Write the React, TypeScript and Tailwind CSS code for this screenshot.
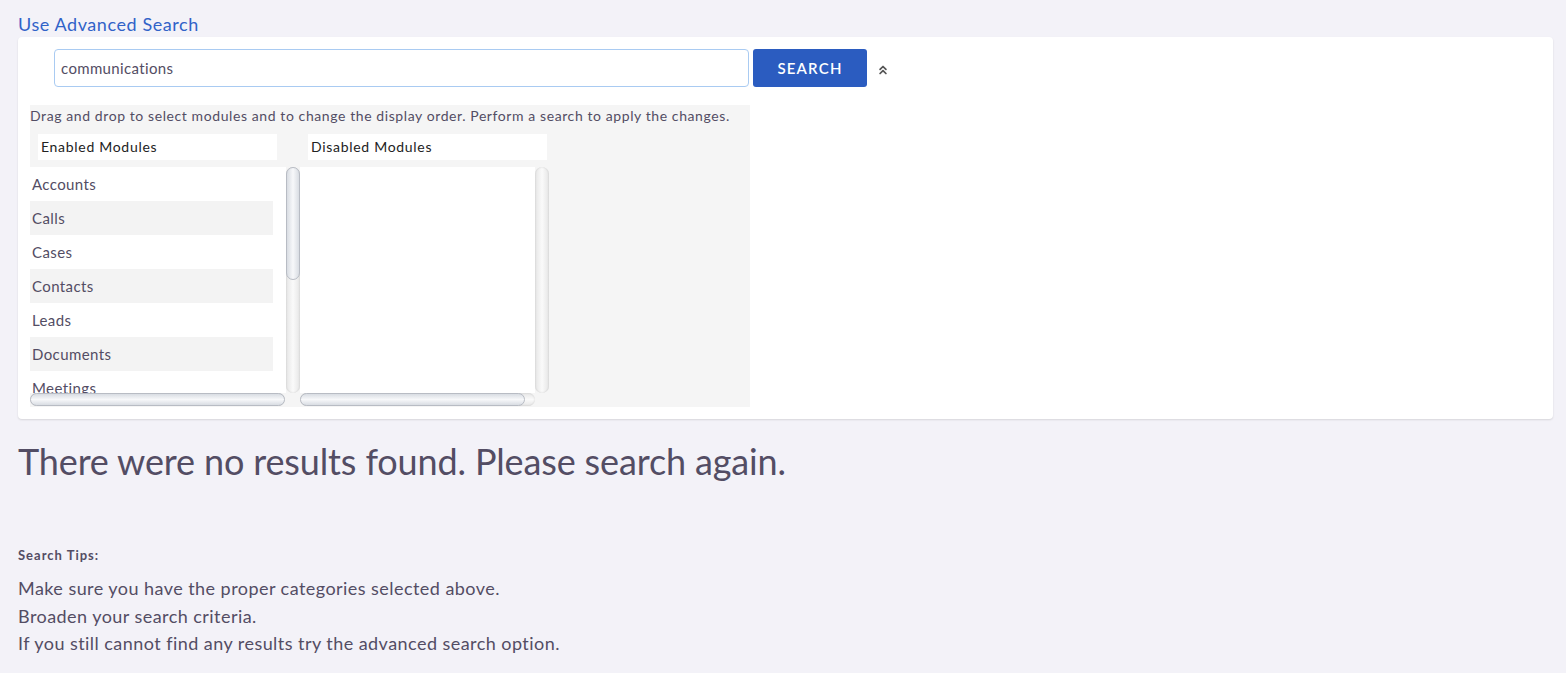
import { ChevronsUp } from 'lucide-react';

const enabledModules = ['Accounts', 'Calls', 'Cases', 'Contacts', 'Leads', 'Documents', 'Meetings', 'Notes'];

const VScroll = ({ thumb }: { thumb: string }) => (
    <div className="relative w-[14px] h-full rounded-full bg-gradient-to-r from-[#e6e6e6] via-[#fafafa] to-[#e6e6e6] shadow-[inset_0_0_2px_rgba(0,0,0,0.15)]">
        <div className={`absolute left-0 top-0 w-[14px] ${thumb} rounded-full border border-[#b8bcc4] bg-gradient-to-r from-[#d9dde3] via-[#f7f8fa] to-[#d9dde3]`} />
    </div>
);

const HScroll = ({ thumb }: { thumb: string }) => (
    <div className="relative h-[13px] w-full rounded-full bg-gradient-to-b from-[#e6e6e6] via-[#fafafa] to-[#e6e6e6] shadow-[inset_0_0_2px_rgba(0,0,0,0.15)]">
        <div className={`absolute left-0 top-0 h-[13px] ${thumb} rounded-full border border-[#b8bcc4] bg-gradient-to-b from-[#d9dde3] via-[#f7f8fa] to-[#d9dde3]`} />
    </div>
);

const App = () => {
    return (
        <div className="min-h-screen bg-[#f3f2f8] pl-[18px] pr-[13px] pt-[12px] font-['Lato','Noto_Sans',sans-serif] text-[#534d64]">
            <a href="#" className="block text-[18px] leading-[25px] tracking-[0.58px] text-[#3162c8]">Use Advanced Search</a>

            <div className="bg-white rounded-[4px] shadow-[0_1px_2px_rgba(0,0,0,0.12)] px-3 pt-3 pb-[12px]">
                {/* search row */}
                <div className="flex items-center ml-6">
                    <input
                        defaultValue="communications"
                        className="w-[695px] h-[38px] rounded-[4px] border border-[#a9cbf2] px-[6px] text-[15px] tracking-[0.35px] text-[#534d64] outline-none"
                    />
                    <button className="ml-[4px] w-[114px] h-[38px] rounded-[3px] bg-[#2b5cc0] text-white text-[15px] font-semibold tracking-[0.08em]">
                        SEARCH
                    </button>
                    <ChevronsUp className="ml-[9px] mt-[3px] text-[#555]" size={14} strokeWidth={3} />
                </div>

                {/* module selector */}
                <div className="mt-[18px] w-[720px] h-[302px] bg-[#f5f5f5]">
                    <p className="text-[14px] leading-[22px] tracking-[0.59px]">
                        Drag and drop to select modules and to change the display order. Perform a search to apply the changes.
                    </p>
                    <div className="flex mt-[7px]">
                        <div className="w-[270px]">
                            <div className="ml-2 w-[239px] h-[26px] bg-white px-[3px] text-[14px] leading-[26px] tracking-[0.7px] text-[#222]">Enabled Modules</div>
                            <div className="mt-[7px] grid grid-cols-[256px_14px] grid-rows-[226px_13px]">
                                <div className="bg-white overflow-hidden">
                                    {enabledModules.map((m, i) => (
                                        <div
                                            key={m}
                                            className={`w-[243px] h-[34px] pl-[2px] text-[15px] leading-[34px] tracking-[0.4px] ${i % 2 === 1 ? 'bg-[#f3f3f3]' : 'bg-white'}`}
                                        >
                                            {m}
                                        </div>
                                    ))}
                                </div>
                                <VScroll thumb="h-[113px]" />
                                <div className="pr-[1px]">
                                    <HScroll thumb="w-full" />
                                </div>
                                <div />
                            </div>
                        </div>
                        <div className="w-[250px]">
                            <div className="ml-2 w-[239px] h-[26px] bg-white px-[3px] text-[14px] leading-[26px] tracking-[0.7px] text-[#222]">Disabled Modules</div>
                            <div className="mt-[7px] grid grid-cols-[235px_14px] grid-rows-[226px_13px]">
                                <div className="bg-white" />
                                <VScroll thumb="h-0 border-0" />
                                <HScroll thumb="w-[225px]" />
                                <div />
                            </div>
                        </div>
                    </div>
                </div>
            </div>

            <h1 className="mt-[19px] text-[36px] leading-[46px] tracking-[-0.14px] text-[#534d64]">There were no results found. Please search again.</h1>

            <div className="mt-[62px]">
                <p className="text-[13px] font-bold leading-[18px] tracking-[1px]">Search Tips:</p>
                <div className="mt-[11px] text-[18px] leading-[27.5px] tracking-[0.45px]">
                    <p>Make sure you have the proper categories selected above.</p>
                    <p>Broaden your search criteria.</p>
                    <p>If you still cannot find any results try the advanced search option.</p>
                </div>
            </div>
        </div>
    );
};

export default App;
